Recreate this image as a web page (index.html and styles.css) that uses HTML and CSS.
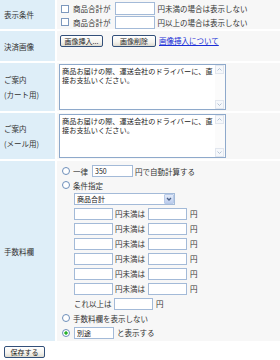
FILE: index.html
```html
<!DOCTYPE html>
<html lang="ja">
<head>
    <meta charset="UTF-8">
    <meta name="viewport" content="width=device-width, initial-scale=1.0">
    <title>決済設定</title>
    <link rel="stylesheet" href="styles.css">
</head>
<body>
    <form class="settings">
        <div class="grid">
            <div class="label">表示条件</div>
            <div class="cell cond">
                <label class="line"><input type="checkbox" class="chk"><span>商品合計が</span><input type="text" class="num"><span>円未満の場合は表示しない</span></label>
                <label class="line"><input type="checkbox" class="chk"><span>商品合計が</span><input type="text" class="num"><span>円以上の場合は表示しない</span></label>
            </div>

            <div class="label">決済画像</div>
            <div class="cell image">
                <button type="button" class="btn btn-insert">画像挿入...</button>
                <button type="button" class="btn btn-delete">画像削除</button>
                <a href="#" class="help">画像挿入について</a>
            </div>

            <div class="label two">ご案内<br>(カート用)</div>
            <div class="cell memo-cell">
                <div class="memo">
                    <textarea class="memo-text">商品お届けの際、運送会社のドライバーに、直接お支払いください。</textarea>
                    <div class="memo-bar">
                        <span class="memo-arrow"><svg width="7" height="7" viewBox="0 0 7 7"><path d="M1.5 4.5 L3.5 2.5 L5.5 4.5" fill="none" stroke="#b4c2d4" stroke-width="1"/></svg></span>
                        <span class="memo-arrow"><svg width="7" height="7" viewBox="0 0 7 7"><path d="M1.5 2.5 L3.5 4.5 L5.5 2.5" fill="none" stroke="#b4c2d4" stroke-width="1"/></svg></span>
                    </div>
                </div>
            </div>

            <div class="label two">ご案内<br>(メール用)</div>
            <div class="cell memo-cell">
                <div class="memo memo-mail">
                    <textarea class="memo-text">商品お届けの際、運送会社のドライバーに、直接お支払いください。</textarea>
                    <div class="memo-bar">
                        <span class="memo-arrow"><svg width="7" height="7" viewBox="0 0 7 7"><path d="M1.5 4.5 L3.5 2.5 L5.5 4.5" fill="none" stroke="#b4c2d4" stroke-width="1"/></svg></span>
                        <span class="memo-arrow"><svg width="7" height="7" viewBox="0 0 7 7"><path d="M1.5 2.5 L3.5 4.5 L5.5 2.5" fill="none" stroke="#b4c2d4" stroke-width="1"/></svg></span>
                    </div>
                </div>
            </div>

            <div class="label">手数料欄</div>
            <div class="cell fee">
                <label class="row"><input type="radio" name="fee" class="rad"><span>一律</span><input type="text" class="num flat" value="350"><span>円で自動計算する</span></label>
                <label class="row"><input type="radio" name="fee" class="rad"><span>条件指定</span></label>
                <div class="row sub">
                    <div class="pick">
                        <select class="pick-select"><option>商品合計</option></select>
                        <span class="pick-arrow"><svg width="8" height="8" viewBox="0 0 8 8"><path d="M2 3 L4 5 L6 3" fill="none" stroke="#4a5f86" stroke-width="1.3"/></svg></span>
                    </div>
                </div>
                <div class="row sub step"><input type="text" class="num"><span class="mid">円未満は</span><input type="text" class="num"><span>円</span></div>
                <div class="row sub step"><input type="text" class="num"><span class="mid">円未満は</span><input type="text" class="num"><span>円</span></div>
                <div class="row sub step"><input type="text" class="num"><span class="mid">円未満は</span><input type="text" class="num"><span>円</span></div>
                <div class="row sub step"><input type="text" class="num"><span class="mid">円未満は</span><input type="text" class="num"><span>円</span></div>
                <div class="row sub step"><input type="text" class="num"><span class="mid">円未満は</span><input type="text" class="num"><span>円</span></div>
                <div class="row sub step"><input type="text" class="num"><span class="mid">円未満は</span><input type="text" class="num"><span>円</span></div>
                <div class="row sub step"><span>これ以上は</span><input type="text" class="num over"><span>円</span></div>
                <label class="row"><input type="radio" name="fee" class="rad"><span>手数料欄を表示しない</span></label>
                <label class="row step"><input type="radio" name="fee" class="rad" checked><input type="text" class="num other" value="別途"><span>と表示する</span></label>
            </div>
        </div>
        <div class="save">
            <button type="submit" class="btn btn-save">保存する</button>
        </div>
    </form>
</body>
</html>
```

FILE: styles.css
```css
body{
    margin: 0;
    background: #fff;
    color: #333;
    font-family: "Noto Sans CJK JP", "Noto Sans", sans-serif;
    font-size: 7.5px;
}
.grid{
    display: grid;
    grid-template-columns: 55px 1fr;
    gap: 2px;
}
.label{
    background: #deeef8;
    display: flex;
    align-items: center;
    padding-left: 4px;
    line-height: 15px;
}
.cell{
    background: #f7f7f7;
    box-sizing: border-box;
}

/* 表示条件 */
.cond{
    height: 29px;
    padding: 2px 0 0 4px;
}
.line{
    display: flex;
    align-items: center;
    height: 13.5px;
}
.chk{
    appearance: none;
    width: 8px;
    height: 8px;
    margin: 0 4px 0 0;
    border: 1px solid #7d98bd;
    background: #fff;
    box-sizing: border-box;
}
.num{
    box-sizing: border-box;
    width: 39px;
    height: 12px;
    margin: 0;
    padding: 0 2px;
    border: 1px solid #a3bad8;
    background: #fff;
    font-family: inherit;
    font-size: 7px;
    color: #222;
}
.cond .num{
    width: 40px;
    height: 13px;
    margin: 0 3px 0 4px;
}

/* 決済画像 */
.image{
    height: 30px;
    padding: 4px 0 0 3px;
    display: flex;
    align-items: flex-start;
}
.btn{
    height: 12px;
    box-sizing: border-box;
    padding: 0;
    border: 1px solid #33507a;
    border-radius: 2px;
    background: linear-gradient(#ffffff, #f4f3ee 60%, #dedbd0);
    font-family: inherit;
    font-size: 7px;
    color: #222;
    line-height: 10px;
}
.btn-insert{
    width: 43px;
}
.btn-delete{
    width: 44px;
    margin-left: 9px;
}
.help{
    margin-left: 3px;
    color: #1a2fd6;
    line-height: 12px;
}

/* ご案内 */
.memo-cell{
    padding: 1px 0 1px 2px;
}
.memo{
    display: flex;
    width: 167px;
    height: 46px;
    box-sizing: border-box;
    border: 1px solid #8ea9cb;
    background: #fff;
}
.memo-mail{
    height: 44px;
}
.memo-text{
    flex: 1;
    margin: 0;
    padding: 2px 0 0 2px;
    border: none;
    resize: none;
    overflow: hidden;
    background: transparent;
    font-family: inherit;
    font-size: 7.2px;
    line-height: 9px;
    color: #222;
}
.memo-bar{
    width: 10px;
    display: flex;
    flex-direction: column;
    justify-content: space-between;
    background: #fbfbfb;
}
.memo-arrow{
    width: 9px;
    height: 9px;
    box-sizing: border-box;
    border: 1px solid #e1e6ee;
    background: #f6f8fb;
    display: flex;
    align-items: center;
    justify-content: center;
}

/* 手数料欄 */
.fee{
    height: 180px;
    padding: 3px 0 0 5px;
}
.row{
    display: flex;
    align-items: center;
    height: 14px;
}
.step{
    height: 15px;
}
.sub{
    padding-left: 12px;
}
.rad{
    appearance: none;
    width: 8px;
    height: 8px;
    margin: 0 3px 0 0;
    border: 1px solid #6e8fba;
    border-radius: 50%;
    background: #fff;
    box-sizing: border-box;
}
.rad:checked{
    background: radial-gradient(circle, #27b02a 0 1.4px, #fff 1.9px);
}
.flat{
    width: 41px;
    margin: 0 2px 0 4px;
}
.mid{
    margin: 0 3px 0 2px;
}
.step .num + span:last-child{
    margin-left: 3px;
}
.over{
    margin-left: 2.5px;
}
.other{
    width: 40px;
    margin: 0 0 0 1px;
}
.pick{
    display: flex;
    align-items: center;
    width: 101px;
    height: 12px;
    box-sizing: border-box;
    border: 1px solid #a3bad8;
    background: #fff;
}
.pick-select{
    appearance: none;
    flex: 1;
    height: 10px;
    border: none;
    padding: 0 0 0 2px;
    margin: 0;
    background: transparent;
    font-family: inherit;
    font-size: 7px;
    color: #111;
}
.pick-arrow{
    width: 10px;
    height: 10px;
    box-sizing: border-box;
    border: 1px solid #b8cae8;
    border-radius: 1px;
    background: linear-gradient(#e3ebf9, #bccdee);
    display: flex;
    align-items: center;
    justify-content: center;
}

.save{
    padding: 5px 4px;
}
.btn-save{
    width: 41px;
}
```
